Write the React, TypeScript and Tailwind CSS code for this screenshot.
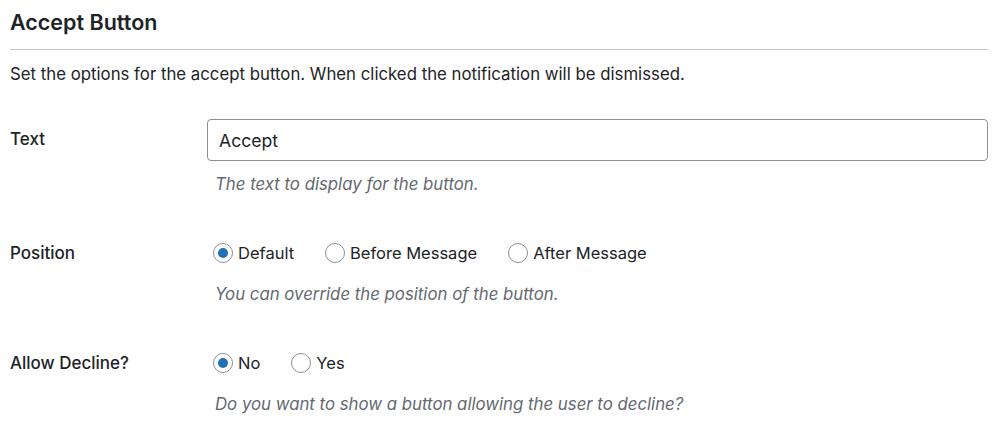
import React, { useState } from 'react';

type Option = { value: string; label: string };

const Radio: React.FC<{ checked: boolean; label: string; onClick: () => void }> = ({ checked, label, onClick }) => (
  <label className="flex items-center cursor-pointer" onClick={onClick}>
    <span className="w-[20px] h-[20px] rounded-full border border-[#8c8f94] bg-white flex items-center justify-center shrink-0">
      {checked && <span className="w-[10px] h-[10px] rounded-full bg-[#2271b1]"></span>}
    </span>
    <span className="ml-[5px] text-[16.5px] leading-[20px] text-[#1d2327]">{label}</span>
  </label>
);

const RadioGroup: React.FC<{ options: Option[]; value: string; onChange: (v: string) => void }> = ({ options, value, onChange }) => (
  <div className="flex items-center gap-[31px]">
    {options.map(o => (
      <Radio key={o.value} checked={value === o.value} label={o.label} onClick={() => onChange(o.value)} />
    ))}
  </div>
);

const Hint: React.FC<{ children: React.ReactNode }> = ({ children }) => (
  <p className="text-[16.8px] leading-[20px] italic text-[#646970] ml-[8px]">{children}</p>
);

export default function App() {
  const [text, setText] = useState('Accept');
  const [position, setPosition] = useState('default');
  const [decline, setDecline] = useState('no');

  return (
    <div className="w-[1000px] h-[443px] bg-white px-[10px] font-['Inter',sans-serif] text-[#1d2327] overflow-hidden">
      <h2 className="pt-[11px] text-[21.5px] font-semibold leading-[22px]">Accept Button</h2>
      <hr className="mt-[16px] border-t border-[#c3c4c7] w-[978px]" />
      <p className="mt-[15px] text-[16.8px] leading-[18px]">
        Set the options for the accept button. When clicked the notification will be dismissed.
      </p>

      {/* Text */}
      <div className="flex mt-[36px]">
        <div className="w-[197px] pt-[10px] text-[17px] leading-[20px] font-medium">Text</div>
        <div>
          <input
            value={text}
            onChange={e => setText(e.target.value)}
            className="w-[781px] h-[42px] px-[11px] rounded-[4px] border border-[#8c8f94] text-[17.6px] outline-none"
          />
          <div className="mt-[13px]"><Hint>The text to display for the button.</Hint></div>
        </div>
      </div>

      {/* Position */}
      <div className="flex mt-[49px]">
        <div className="w-[197px] text-[17px] leading-[20px] font-medium">Position</div>
        <div className="pl-[6px]">
          <RadioGroup
            value={position}
            onChange={setPosition}
            options={[
              { value: 'default', label: 'Default' },
              { value: 'before', label: 'Before Message' },
              { value: 'after', label: 'After Message' },
            ]}
          />
          <div className="mt-[21px] -ml-[6px]"><Hint>You can override the position of the button.</Hint></div>
        </div>
      </div>

      {/* Allow Decline */}
      <div className="flex mt-[49px]">
        <div className="w-[197px] text-[17px] leading-[20px] font-medium">Allow Decline?</div>
        <div className="pl-[6px]">
          <RadioGroup
            value={decline}
            onChange={setDecline}
            options={[
              { value: 'no', label: 'No' },
              { value: 'yes', label: 'Yes' },
            ]}
          />
          <div className="mt-[21px] -ml-[6px]"><Hint>Do you want to show a button allowing the user to decline?</Hint></div>
        </div>
      </div>
    </div>
  );
}
